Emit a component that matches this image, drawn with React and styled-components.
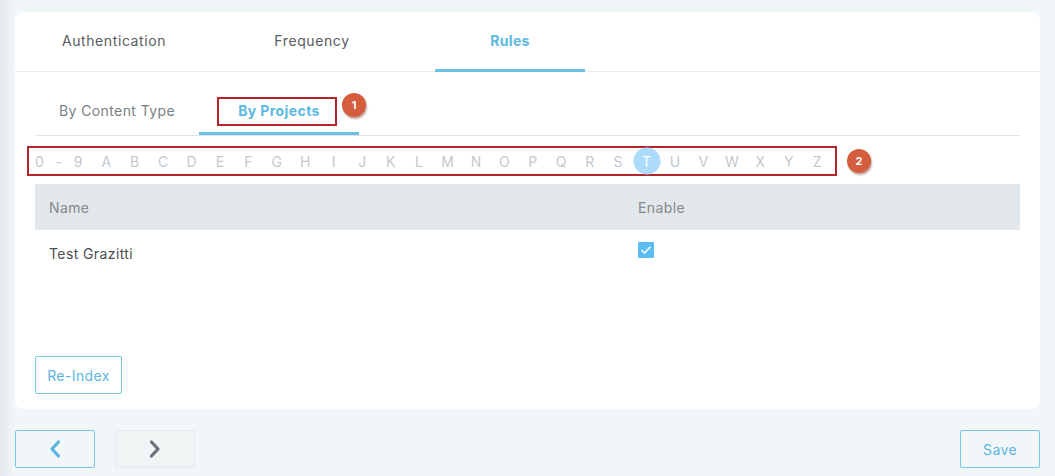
import React from "react";
import styled, { createGlobalStyle } from "styled-components";

const Global = createGlobalStyle`
  html, body { margin: 0; padding: 0; }
  body {
    background: #f1f7f8;
    font-family: Inter, "DejaVu Sans", sans-serif;
    font-size: 14px;
    letter-spacing: 0.4px;
  }
  #root { min-height: 476px; }
`;

const Page = styled.div`
  width: 1055px;
  height: 476px;
  box-sizing: border-box;
  padding: 12px 15px 0 15px;
  background: linear-gradient(to right, #e4eaeb 0px, #edf3f4 10px, #f1f7f8 14px);
`;

const Card = styled.div`
  background: #fff;
  border-radius: 8px;
  height: 397px;
  box-sizing: border-box;
  display: flex;
  flex-direction: column;
  padding-bottom: 15px;
`;

const TopTabs = styled.div`
  display: flex;
  gap: 48px;
  padding-left: 24px;
  height: 60px;
  box-shadow: inset 0 -1px 0 #e9eced;
`;

const TopTab = styled.div`
  width: 150px;
  height: 60px;
  box-sizing: border-box;
  display: flex;
  align-items: center;
  justify-content: center;
  letter-spacing: ${(p) => (p.$active ? "0.3px" : "0.6px")};
  color: ${(p) => (p.$active ? "#5cb9e2" : "#585c60")};
  font-weight: ${(p) => (p.$active ? 700 : 400)};
  border-bottom: 3px solid ${(p) => (p.$active ? "#6bc1e4" : "transparent")};
`;

const Body = styled.div`
  flex: 1;
  display: flex;
  flex-direction: column;
  padding: 0 20px;
`;

const SubTabs = styled.div`
  display: flex;
  margin-top: 14px;
  border-bottom: 1px solid #dfe3e5;
`;

const SubTab = styled.div`
  position: relative;
  width: ${(p) => p.$w}px;
  height: 49px;
  box-sizing: border-box;
  display: flex;
  align-items: center;
  justify-content: center;
  padding-top: 2px;
  color: ${(p) => (p.$active ? "#5cb9e2" : "#7a7f83")};
  font-weight: ${(p) => (p.$active ? 700 : 400)};
  border-bottom: 3px solid ${(p) => (p.$active ? "#6bc1e4" : "transparent")};
`;

const Highlight = styled.div`
  position: absolute;
  left: ${(p) => p.$x}px;
  top: ${(p) => p.$y}px;
  width: ${(p) => p.$w}px;
  height: ${(p) => p.$h}px;
  box-sizing: border-box;
  border: 2px solid #b3252b;
`;

const Badge = styled.div`
  ${(p) => (p.$abs ? `position: absolute; left: ${p.$x}px; top: ${p.$y}px;` : "")}
  width: 24px;
  height: 24px;
  border-radius: 50%;
  background: #d35d3d;
  box-shadow: 1px 2px 2px rgba(120, 60, 40, 0.45);
  color: #fff;
  font-size: 11px;
  font-weight: 700;
  display: flex;
  align-items: center;
  justify-content: center;
  letter-spacing: 0;
  flex: 0 0 auto;
`;

const AlphaWrap = styled.div`
  display: flex;
  align-items: center;
  gap: 10px;
  margin: 10px 0 0 -8px;
`;

const AlphaBox = styled.div`
  width: 810px;
  height: 30px;
  box-sizing: border-box;
  border: 2px solid #b3252b;
  display: flex;
  align-items: center;
  padding-left: 6px;
`;

const Range = styled.span`
  width: 57px;
  flex: 0 0 57px;
  color: #c5c9cc;
  font-size: 14px;
  word-spacing: 7px;
`;

const Letter = styled.span`
  flex: 0 0 28.44px;
  display: flex;
  align-items: center;
  justify-content: center;
  height: 26px;
  color: ${(p) => (p.$active ? "#fff" : "#c5c9cc")};
  font-size: 14px;
  letter-spacing: 0;
  position: relative;
  &::before {
    content: "";
    display: ${(p) => (p.$active ? "block" : "none")};
    position: absolute;
    width: 27px;
    height: 27px;
    border-radius: 50%;
    background: #acdcfa;
    left: 50%;
    top: 50%;
    transform: translate(-50%, -50%);
  }
  span { position: relative; }
`;

const Table = styled.div`
  margin-top: 8px;
  display: grid;
  grid-template-columns: 589px 1fr;
`;

const HeadCell = styled.div`
  background: #e1e7ea;
  height: 46px;
  display: flex;
  align-items: center;
  padding-left: 14px;
  color: #85898c;
`;

const Cell = styled.div`
  height: 48px;
  display: flex;
  align-items: ${(p) => (p.$top ? "flex-start" : "center")};
  padding-left: 14px;
  padding-top: ${(p) => (p.$top ? "12px" : "0")};
  padding-bottom: ${(p) => (p.$top ? "0" : "2px")};
  box-sizing: border-box;
  color: #4a4e51;
`;

const Check = styled.span`
  width: 16px;
  height: 16px;
  background: #5cbdf3;
  display: inline-flex;
  align-items: center;
  justify-content: center;
  border-radius: 1px;
`;

const OutlineButton = styled.button`
  width: ${(p) => p.$w}px;
  height: 38px;
  box-sizing: border-box;
  background: ${(p) => (p.$muted ? "#f1f4f5" : "transparent")};
  border: 1px solid ${(p) => (p.$muted ? "#e7eaeb" : "#78c6e5")};
  border-radius: 2px;
  color: #5cb6df;
  font-family: inherit;
  font-size: 14px;
  letter-spacing: 0.4px;
  display: flex;
  align-items: center;
  justify-content: center;
  padding: 0;
  cursor: pointer;
`;

const ReIndexRow = styled.div`
  margin-top: auto;
  display: flex;
`;

const Footer = styled.div`
  display: flex;
  align-items: center;
  margin-top: 21px;
  gap: 20px;
`;

const Spacer = styled.div`
  flex: 1;
`;

const letters = "ABCDEFGHIJKLMNOPQRSTUVWXYZ".split("");

export default function App() {
  return (
    <>
      <Global />
      <Page>
        <Card>
          <TopTabs>
            <TopTab>Authentication</TopTab>
            <TopTab>Frequency</TopTab>
            <TopTab $active>Rules</TopTab>
          </TopTabs>
          <Body>
            <SubTabs>
              <SubTab $w={164}>By Content Type</SubTab>
              <SubTab $w={160} $active>
                By Projects
                <Highlight $x={18} $y={11} $w={120} $h={29} />
                <Badge $abs $x={143} $y={7}>1</Badge>
              </SubTab>
            </SubTabs>
            <AlphaWrap>
              <AlphaBox>
                <Range>0 - 9</Range>
                {letters.map((l) => (
                  <Letter key={l} $active={l === "T"}>
                    <span>{l}</span>
                  </Letter>
                ))}
              </AlphaBox>
              <Badge>2</Badge>
            </AlphaWrap>
            <Table>
              <HeadCell>Name</HeadCell>
              <HeadCell>Enable</HeadCell>
              <Cell>Test Grazitti</Cell>
              <Cell $top>
                <Check>
                  <svg width="12" height="10" viewBox="0 0 12 10">
                    <path d="M1.5 5.2 L4.6 8 L10.5 1.8" fill="none" stroke="#fff" strokeWidth="1.6" />
                  </svg>
                </Check>
              </Cell>
            </Table>
            <ReIndexRow>
              <OutlineButton $w={87}>Re-Index</OutlineButton>
            </ReIndexRow>
          </Body>
        </Card>
        <Footer>
          <OutlineButton $w={80} aria-label="Previous">
            <svg width="14" height="20" viewBox="0 0 14 20">
              <path d="M10.5 3 L4 10 L10.5 17" fill="none" stroke="#5ab4e5" strokeWidth="3.2" strokeLinecap="round" strokeLinejoin="round" />
            </svg>
          </OutlineButton>
          <OutlineButton $w={80} $muted aria-label="Next">
            <svg width="14" height="20" viewBox="0 0 14 20">
              <path d="M3.5 3 L10 10 L3.5 17" fill="none" stroke="#6e6e7c" strokeWidth="3.2" strokeLinecap="round" strokeLinejoin="round" />
            </svg>
          </OutlineButton>
          <Spacer />
          <OutlineButton $w={80}>Save</OutlineButton>
        </Footer>
      </Page>
    </>
  );
}
